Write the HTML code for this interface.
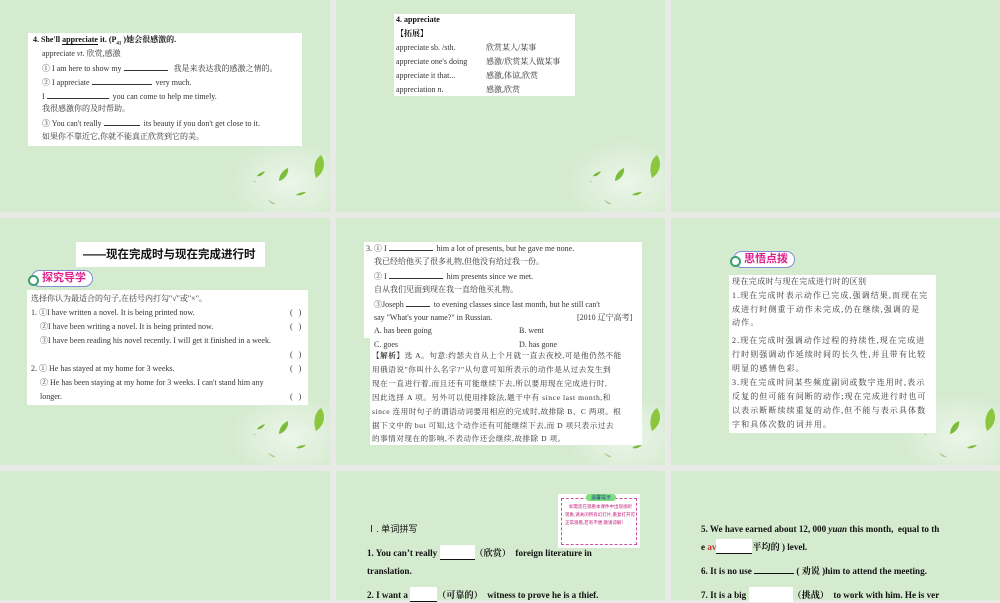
<!DOCTYPE html>
<html><head><meta charset="utf-8">
<style>
*{margin:0;padding:0;box-sizing:border-box}
body{width:1000px;height:600px;background:#e7eae5;position:relative;overflow:hidden;font-family:"Liberation Serif","Noto Serif CJK SC",serif;color:#222}
.s{position:absolute;background:#d5ebd0;overflow:hidden}
.box{position:absolute;background:#fff}
.l{position:absolute;white-space:nowrap;font-size:8px;line-height:10px;color:#333}
.b{font-weight:bold;color:#111}
.badge{position:absolute;height:17px;border:1px solid #7f8fd0;border-radius:9px;background:#fff;color:#e0208a;font-family:"Liberation Sans","Noto Sans CJK SC",sans-serif;font-weight:bold;font-size:11px;line-height:15px;padding-left:10px;padding-right:6px}
.badge:before{content:"";position:absolute;left:-4px;top:4px;width:7px;height:7px;border-radius:50%;background:#fff;border:2px solid #3aa070}
.u{display:inline-block;border-bottom:1px solid #333;height:8px;vertical-align:baseline}
.t{position:absolute;white-space:nowrap;font-size:9.1px;line-height:16px;font-weight:bold;color:#111}
.w{display:inline-block;background:#fff;height:15px;vertical-align:-4px;border-bottom:1px solid #111}
.wn{display:inline-block;background:#fff;height:15px;vertical-align:-4px}
</style></head><body>

<div class="s" style="left:0;top:0;width:330px;height:212px"></div>
<div class="s" style="left:336px;top:0;width:329px;height:212px"></div>
<div class="s" style="left:671px;top:0;width:329px;height:212px"></div>
<div class="s" style="left:0;top:218px;width:330px;height:247px"></div>
<div class="s" style="left:336px;top:218px;width:329px;height:247px"></div>
<div class="s" style="left:671px;top:218px;width:329px;height:247px"></div>
<div class="s" style="left:0;top:471px;width:330px;height:129px"></div>
<div class="s" style="left:336px;top:471px;width:329px;height:129px"></div>
<div class="s" style="left:671px;top:471px;width:329px;height:129px"></div>

<svg style="position:absolute;left:0;top:0" width="1000" height="600">
<defs>
<radialGradient id="g" cx="0.6" cy="0.6" r="0.6"><stop offset="0" stop-color="#fff" stop-opacity=".55"/><stop offset="1" stop-color="#fff" stop-opacity="0"/></radialGradient>
<g id="lf">
<rect x="230" y="140" width="100" height="72" fill="url(#g)"/>
<path d="M321 155 C326 162 325 172 316 178 C313 170 314 160 321 155Z" fill="#8cc63f"/>
<path d="M288 168 C289 174 284 180 279 181 C279 175 283 170 288 168Z" fill="#7dbb3a"/>
<path d="M265 171 C262 172 258 174 257 176 C260 177 263 175 265 171Z" fill="#78b53a"/>
<path d="M306 192 C302 192 298 193 296 195 C300 196 303 195 306 192Z" fill="#7dbb3a"/>
<path d="M268 200 C271 201 274 203 276 204 C273 205 270 203 268 200Z" fill="#a9cf90"/>
<path d="M253 181 l3 1" stroke="#b9d9a9" stroke-width="1"/>
</g>
</defs>
<use href="#lf"/>
<use href="#lf" x="336"/>
<use href="#lf" y="253"/>
<use href="#lf" x="336" y="253"/>
<use href="#lf" x="671" y="253"/>
</svg>

<!-- slide 1 -->
<div class="box" style="left:28px;top:33px;width:274px;height:113px"></div>
<div class="l b" style="left:33px;top:35px">4. She'll <span style="border-bottom:1px solid #111">appreciate</span> it. (P<sub style="font-size:5px">41</sub> )她会很感激的.</div>
<div class="l" style="left:42px;top:49px">appreciate <i>vt</i>. 欣赏,感激</div>
<div class="l" style="left:42px;top:63px">① I am here to show my <span class="u" style="width:44px"></span>&nbsp;&nbsp; 我是来表达我的感激之情的。</div>
<div class="l" style="left:42px;top:77px">② I appreciate <span class="u" style="width:60px"></span>&nbsp; very much.</div>
<div class="l" style="left:42px;top:91px">I <span class="u" style="width:62px"></span>&nbsp; you can come to help me timely.</div>
<div class="l" style="left:42px;top:104px">我很感激你的及时帮助。</div>
<div class="l" style="left:42px;top:118px">③ You can't really <span class="u" style="width:36px"></span>&nbsp; its beauty if you don't get close to it.</div>
<div class="l" style="left:42px;top:132px">如果你不靠近它,你就不能真正欣赏到它的美。</div>

<!-- slide 2 -->
<div class="box" style="left:394px;top:14px;width:181px;height:82px"></div>
<div class="l b" style="left:396px;top:15px">4. appreciate</div>
<div class="l b" style="left:396px;top:29px">【拓展】</div>
<div class="l" style="left:396px;top:43px">appreciate sb. /sth.</div><div class="l" style="left:486px;top:43px">欣赏某人/某事</div>
<div class="l" style="left:396px;top:57px">appreciate one's doing</div><div class="l" style="left:486px;top:57px">感激/欣赏某人做某事</div>
<div class="l" style="left:396px;top:71px">appreciate it that...</div><div class="l" style="left:486px;top:71px">感激,体谅,欣赏</div>
<div class="l" style="left:396px;top:85px">appreciation <i>n</i>.</div><div class="l" style="left:486px;top:85px">感激,欣赏</div>

<!-- slide 4 -->
<div class="box" style="left:76px;top:242px;width:189px;height:25px"></div>
<div class="l" style="left:83px;top:248px;font-family:'Liberation Sans','Noto Sans CJK SC',sans-serif;font-weight:bold;font-size:11.5px;line-height:14px;color:#111">——现在完成时与现在完成进行时</div>
<div class="badge" style="left:31px;top:270px">探究导学</div>
<div class="box" style="left:27px;top:290px;width:281px;height:115px"></div>
<div class="l" style="left:31px;top:294px">选择你认为最适合的句子,在括号内打勾"√"或"×"。</div>
<div class="l" style="left:31px;top:308px">1. ①I have written a novel. It is being printed now.</div>
<div class="l" style="left:40px;top:322px">②I have been writing a novel. It is being printed now.</div>
<div class="l" style="left:40px;top:336px">③I have been reading his novel recently. I will get it finished in a week.</div>
<div class="l" style="left:31px;top:364px">2. ① He has stayed at my home for 3 weeks.</div>
<div class="l" style="left:40px;top:378px">② He has been staying at my home for 3 weeks. I can't stand him any</div>
<div class="l" style="left:40px;top:392px">longer.</div>
<div class="l" style="left:290px;top:308px">(&nbsp;&nbsp;&nbsp;)</div>
<div class="l" style="left:290px;top:322px">(&nbsp;&nbsp;&nbsp;)</div>
<div class="l" style="left:290px;top:350px">(&nbsp;&nbsp;&nbsp;)</div>
<div class="l" style="left:290px;top:364px">(&nbsp;&nbsp;&nbsp;)</div>
<div class="l" style="left:290px;top:392px">(&nbsp;&nbsp;&nbsp;)</div>

<!-- slide 5 -->
<div class="box" style="left:364px;top:242px;width:278px;height:96px"></div>
<div class="box" style="left:370px;top:338px;width:272px;height:107px"></div>
<div class="l" style="left:366px;top:243px">3. ① I <span class="u" style="width:44px"></span>&nbsp; him a lot of presents, but he gave me none.</div>
<div class="l" style="left:374px;top:257px">我已经给他买了很多礼物,但他没有给过我一份。</div>
<div class="l" style="left:374px;top:271px">② I <span class="u" style="width:54px"></span>&nbsp; him presents since we met.</div>
<div class="l" style="left:374px;top:285px">自从我们见面到现在我一直给他买礼物。</div>
<div class="l" style="left:374px;top:299px">③Joseph <span class="u" style="width:24px"></span>&nbsp; to evening classes since last month, but he still can't</div>
<div class="l" style="left:374px;top:313px">say "What's your name?" in Russian.</div>
<div class="l" style="left:577px;top:313px">[2010 辽宁高考]</div>
<div class="l" style="left:374px;top:326px">A. has been going</div><div class="l" style="left:519px;top:326px">B. went</div>
<div class="l" style="left:374px;top:340px">C. goes</div><div class="l" style="left:519px;top:340px">D. has gone</div>
<div class="l" style="left:372px;top:351px;font-size:7.6px;letter-spacing:.55px"><b>【解析】</b>选 A。句意:约瑟夫自从上个月就一直去夜校,可是他仍然不能</div>
<div class="l" style="left:372px;top:365px;font-size:7.6px;letter-spacing:.55px">用俄语说"你叫什么名字?"从句意可知所表示的动作是从过去发生到</div>
<div class="l" style="left:372px;top:379px;font-size:7.6px;letter-spacing:.55px">现在一直进行着,而且还有可能继续下去,所以要用现在完成进行时,</div>
<div class="l" style="left:372px;top:393px;font-size:7.6px;letter-spacing:.55px">因此选择 A 项。另外可以使用排除法,题干中有 since last month,和</div>
<div class="l" style="left:372px;top:407px;font-size:7.6px;letter-spacing:.5px">since 连用时句子的谓语动词要用相应的完成时,故排除 B、C 两项。根</div>
<div class="l" style="left:372px;top:421px;font-size:7.6px;letter-spacing:.5px">据下文中的 but 可知,这个动作还有可能继续下去,而 D 项只表示过去</div>
<div class="l" style="left:372px;top:434px;font-size:7.6px;letter-spacing:.5px">的事情对现在的影响,不表动作还会继续,故排除 D 项。</div>

<!-- slide 6 -->
<div class="badge" style="left:733px;top:251px">思悟点拨</div>
<div class="box" style="left:729px;top:275px;width:207px;height:158px"></div>
<div class="l" style="left:732px;top:277px;letter-spacing:.4px">现在完成时与现在完成进行时的区别</div>
<div class="l" style="left:732px;top:291px;letter-spacing:1.1px">1.现在完成时表示动作已完成,强调结果,而现在完</div>
<div class="l" style="left:732px;top:305px;letter-spacing:1.1px">成进行时侧重于动作未完成,仍在继续,强调的是</div>
<div class="l" style="left:732px;top:318px;letter-spacing:1.1px">动作。</div>
<div class="l" style="left:732px;top:336px;letter-spacing:1.1px">2.现在完成时强调动作过程的持续性,现在完成进</div>
<div class="l" style="left:732px;top:350px;letter-spacing:1.1px">行时则强调动作延续时间的长久性,并且带有比较</div>
<div class="l" style="left:732px;top:364px;letter-spacing:1.1px">明显的感情色彩。</div>
<div class="l" style="left:732px;top:378px;letter-spacing:1.1px">3.现在完成时同某些频度副词或数字连用时,表示</div>
<div class="l" style="left:732px;top:392px;letter-spacing:1.1px">反复的但可能有间断的动作;现在完成进行时也可</div>
<div class="l" style="left:732px;top:406px;letter-spacing:1.1px">以表示断断续续重复的动作,但不能与表示具体数</div>
<div class="l" style="left:732px;top:420px;letter-spacing:1.1px">字和具体次数的词并用。</div>

<!-- slide 8 -->
<div style="position:absolute;left:558px;top:494px;width:82px;height:54px;background:#fff"></div>
<div style="position:absolute;left:561px;top:498px;width:76px;height:47px;border:1px dashed #d050a0"></div>
<div style="position:absolute;left:586px;top:494px;width:30px;height:7px;background:#7fe07f;border-radius:3px;font-size:5px;line-height:7px;text-align:center;color:#1a3a9a;font-family:'Noto Sans CJK SC',sans-serif">温馨提示</div>
<div style="position:absolute;left:565px;top:503px;width:70px;font-size:4.5px;line-height:8px;color:#c0207a;font-family:'Noto Sans CJK SC',sans-serif">&nbsp;&nbsp;&nbsp;&nbsp;如需您在观看本课件中出现视听现象,请关闭所有幻灯片,重复打开可正常观看,若有不便,敬请谅解!</div>
<div class="t" style="left:367px;top:521px;font-weight:normal;font-family:'Liberation Sans','Noto Sans CJK SC',sans-serif">Ⅰ. 单词拼写</div>
<div class="t" style="left:367px;top:545px">1. You can’t really <span class="w" style="width:35px"></span>（欣赏） &nbsp;foreign literature in</div>
<div class="t" style="left:367px;top:563px">translation.</div>
<div class="t" style="left:367px;top:587px">2. I want a <span class="w" style="width:27px"></span>（可靠的） &nbsp;witness to prove he is a thief.</div>

<!-- slide 9 -->
<div class="t" style="left:701px;top:521px">5. We have earned about 12, 000 <i>yuan</i> this month, &nbsp;equal to th</div>
<div class="t" style="left:701px;top:539px">e <span style="color:#c0302a">av</span><span class="w" style="width:36px"></span>平均的 ) level.</div>
<div class="t" style="left:701px;top:563px">6. It is no use <span class="u" style="width:40px;border-color:#111"></span> ( 劝说 )him to attend the meeting.</div>
<div class="t" style="left:701px;top:587px">7. It is a big <span class="wn" style="width:44px"></span>（挑战） &nbsp;to work with him. He is ver</div>
</body></html>
